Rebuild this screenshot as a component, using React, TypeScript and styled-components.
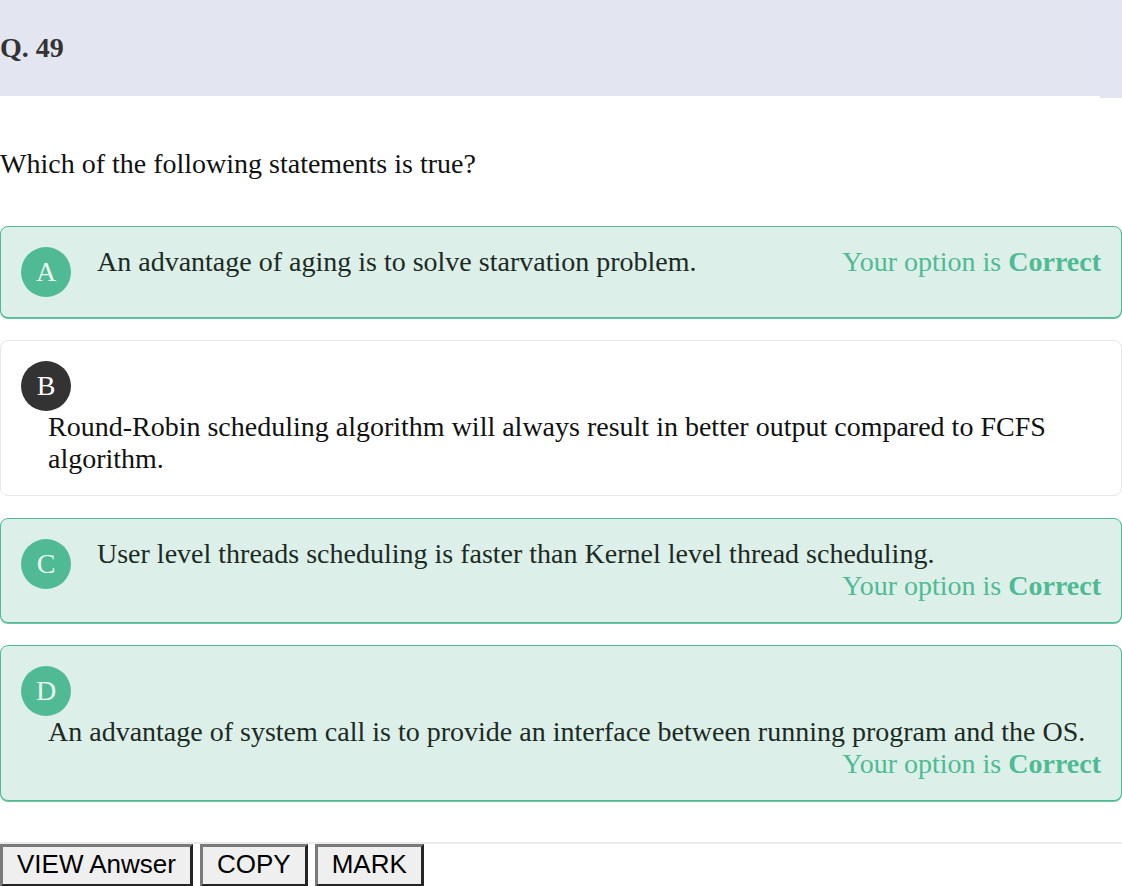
import React from "react";
import styled, { createGlobalStyle } from "styled-components";

interface OptionItem {
	letter: string;
	text: string;
	correct: boolean;
	stacked: boolean;
}

const GlobalStyle = createGlobalStyle`
	html, body {
		margin: 0;
		padding: 0;
		background: #fff;
	}
	body {
		font-family: "Liberation Serif", "Times New Roman", serif;
		color: #111;
	}
`;

const options: OptionItem[] = [
	{
		letter: "A",
		text: "An advantage of aging is to solve starvation problem.",
		correct: true,
		stacked: false,
	},
	{
		letter: "B",
		text: "Round-Robin scheduling algorithm will always result in better output compared to FCFS algorithm.",
		correct: false,
		stacked: true,
	},
	{
		letter: "C",
		text: "User level threads scheduling is faster than Kernel level thread scheduling.",
		correct: true,
		stacked: false,
	},
	{
		letter: "D",
		text: "An advantage of system call is to provide an interface between running program and the OS.",
		correct: true,
		stacked: true,
	},
];

const App = () => {
	return (
		<Page>
			<GlobalStyle />
			<HeaderRow>
				<Header>
					<HeaderTitle>Q. 49</HeaderTitle>
				</Header>
				<HeaderEdge />
			</HeaderRow>

			<Question>Which of the following statements is true?</Question>

			<OptionList>
				{options.map((item) => (
					<Card key={item.letter} correct={item.correct}>
						<CardInner stacked={item.stacked}>
							<Badge correct={item.correct}>{item.letter}</Badge>
							<Body stacked={item.stacked}>
								<OptionText correct={item.correct}>{item.text}</OptionText>
								{item.correct && (
									<Result>
										Your option is <b>Correct</b>
									</Result>
								)}
							</Body>
						</CardInner>
					</Card>
				))}
			</OptionList>

			<Footer>
				<Button>VIEW Anwser</Button>
				<Button>COPY</Button>
				<Button>MARK</Button>
			</Footer>
		</Page>
	);
};

export default App;

const Page = styled.div`
	width: 1122px;
`;

const HeaderRow = styled.div`
	display: flex;
	align-items: flex-start;
`;

const Header = styled.div`
	width: 1100px;
	height: 96px;
	background-color: #e3e6f0;
	display: flex;
	align-items: center;
`;

const HeaderTitle = styled.h2`
	margin: 0;
	font-size: 28px;
	font-weight: 700;
	color: #333;
`;

const HeaderEdge = styled.div`
	flex: 1;
	height: 98px;
	background-color: #e4e5f2;
`;

const Question = styled.p`
	margin: 50px 0 46px;
	font-size: 28px;
	color: #111;
`;

const OptionList = styled.div`
	display: flex;
	flex-direction: column;
	gap: 22px;
`;

const Card = styled.div<{ correct: boolean }>`
	border: 1px solid ${(p) => (p.correct ? "#4fbb93" : "#e6e6e6")};
	background-color: ${(p) => (p.correct ? "#dcf0e9" : "#fff")};
	border-radius: 8px;
	padding: 20px;
	box-shadow: ${(p) => (p.correct ? "0 1px 0 #6cc4a4" : "none")};
`;

const CardInner = styled.div<{ stacked: boolean }>`
	display: flex;
	flex-direction: ${(p) => (p.stacked ? "column" : "row")};
	align-items: flex-start;
`;

const Badge = styled.div<{ correct: boolean }>`
	flex: none;
	width: 50px;
	height: 50px;
	border-radius: 50%;
	background-color: ${(p) => (p.correct ? "#4fba94" : "#333")};
	color: ${(p) => (p.correct ? "#eaf6f1" : "#fff")};
	font-size: 28px;
	line-height: 50px;
	text-align: center;
`;

const Body = styled.div<{ stacked: boolean }>`
	flex: 1;
	align-self: stretch;
	display: flex;
	flex-wrap: wrap;
	margin-left: ${(p) => (p.stacked ? "27px" : "26px")};
	margin-top: ${(p) => (p.stacked ? "0" : "-1px")};
	font-size: 28px;
`;

const OptionText = styled.span<{ correct: boolean }>`
	color: ${(p) => (p.correct ? "#1c2a24" : "#111")};
`;

const Result = styled.span`
	flex: none;
	margin-left: auto;
	white-space: nowrap;
	color: #4fba94;

	b {
		font-weight: 700;
	}
`;

const Footer = styled.div`
	margin-top: 41px;
	border-top: 2px solid #ebebeb;
	display: flex;
	gap: 7px;
`;

const Button = styled.button`
	font-family: "Liberation Sans", Arial, sans-serif;
	font-size: 26px;
	color: #000;
	background-color: #efefef;
	border: 3px outset #7a7a7a;
	border-radius: 0;
	padding: 2px 14px 4px;
	margin: 0;
`;
